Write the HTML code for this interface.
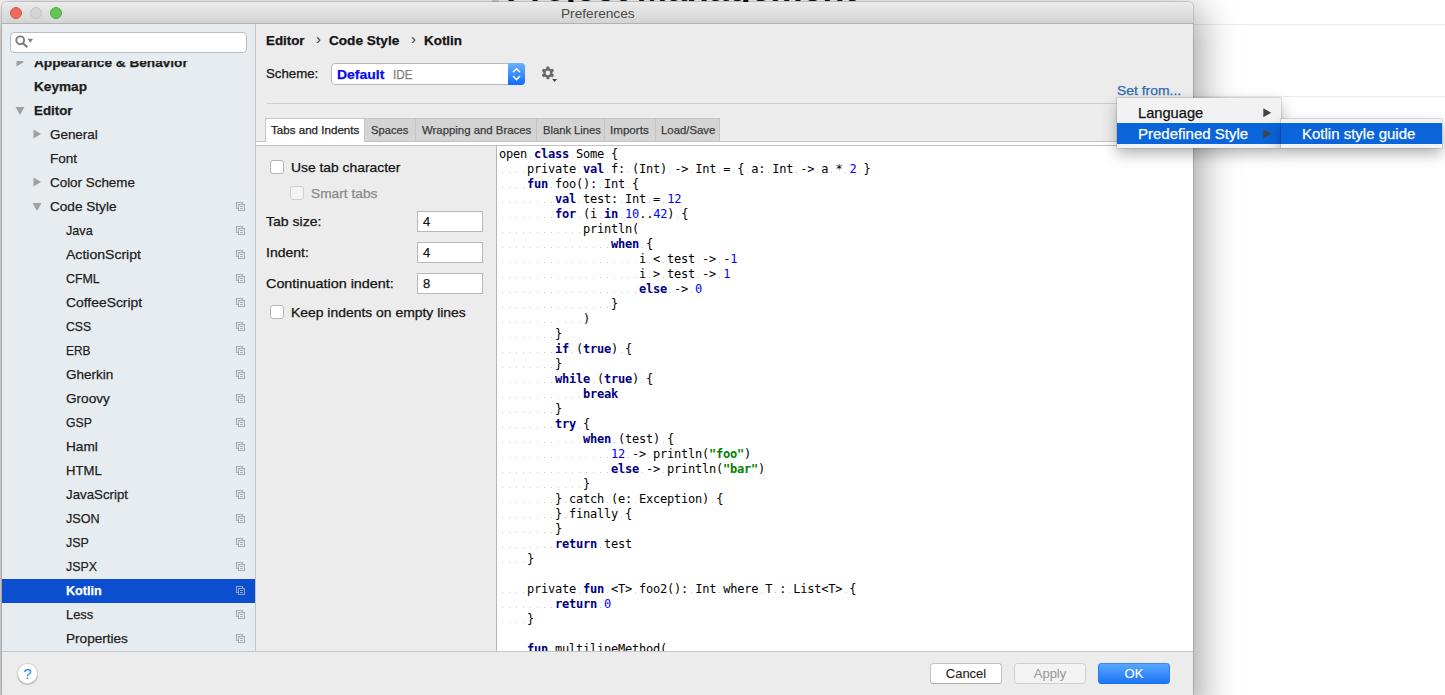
<!DOCTYPE html>
<html><head><meta charset="utf-8"><title>Preferences</title>
<style>
*{box-sizing:border-box;margin:0;padding:0}
html,body{width:1445px;height:695px;overflow:hidden;background:#fff}
body{font-family:"Liberation Sans",Arial,sans-serif;font-size:13px;color:#141414;position:relative;-webkit-text-stroke:0.25px}
.abs{position:absolute}
#bgtitle{-webkit-text-stroke:0;position:absolute;left:506px;top:-28.8px;font-size:36.5px;font-weight:bold;color:#111;white-space:nowrap;line-height:36.5px;letter-spacing:-0.4px}
.hl{position:absolute;height:1px;background:#ebebeb}
#win{position:absolute;left:2px;top:2px;width:1191px;height:700px;background:#ececec;border-radius:5px 5px 0 0;box-shadow:0 0 0 1px rgba(0,0,0,.13),0 12px 38px 7px rgba(0,0,0,.38);overflow:hidden}
#tb{position:absolute;left:0;top:0;width:100%;height:22px;background:linear-gradient(#ebebeb,#d4d4d4);border-bottom:1px solid #b1b1b1;color:#4a4a4a;font-size:13px}
.tl{position:absolute;top:5px;width:12px;height:12px;border-radius:50%}
#side{position:absolute;left:0;top:22px;width:253px;height:627px;background:#e7ecf1;overflow:hidden}
#sideb{position:absolute;left:253px;top:22px;width:1px;height:627px;background:#c3c3c3}
#search{position:absolute;left:8px;top:8px;width:237px;height:21px;background:#fff;border:1px solid #b9bcc0;border-radius:4px}
#tree{position:absolute;left:0;top:37px;width:253px;height:590px;overflow:hidden}
#treein{position:absolute;left:-2px;top:-61px;width:260px;height:700px}
.tr{position:absolute;height:24px;line-height:24px;white-space:nowrap;font-size:13px;color:#1e1e1e}
.tr.b{font-weight:bold}
.tr.w{color:#fff}
.sel{position:absolute;left:2px;width:253px;height:24px;background:#0b4fd0}
.cp{position:absolute;left:236px}
.ar{position:absolute}
#main{position:absolute;left:254px;top:22px;width:937px;height:627px}
.t{position:absolute;white-space:nowrap;line-height:16px;height:16px}
#bar{position:absolute;left:0;top:649px;width:1191px;height:60px;background:#ececec;border-top:1px solid #c5c5c5}
.btn{-webkit-text-stroke:0.1px;position:absolute;top:11px;width:72px;height:21px;border-radius:3.5px;background:#fff;border:1px solid #c2c2c2;border-bottom-color:#acacac;text-align:center;line-height:19px;font-size:13px;color:#1d1d1d}
#editor{position:absolute;left:240px;top:121px;width:700px;height:506px;background:#fff;border-left:1px solid #b5b5b5;border-top:1px solid #c0c0c0;overflow:hidden}
#code{-webkit-text-stroke:0;position:absolute;left:2px;top:1px;font-family:"DejaVu Sans Mono","Liberation Mono",monospace;font-size:12px;line-height:15px;color:#000;white-space:pre;letter-spacing:-0.224px}
.ln{height:15px}
.ln b{color:#000080}
.ln b.s{color:#008000}
.ln u{color:#0000ff;text-decoration:none}
.ln i{font-style:normal;background-image:linear-gradient(90deg,rgba(0,0,0,0) 3px,#c4c4c4 3px,#c4c4c4 4px,rgba(0,0,0,0) 4px);background-size:7px 1px;background-position:0 10px;background-repeat:repeat-x}
.tab{position:absolute;top:0;height:23px;line-height:23px;font-size:11.5px;color:#3c3c3c;border-right:1px solid #c4c4c4;background:#d4d4d4;white-space:nowrap}
.tab span{position:absolute;top:0}
.cb{position:absolute;width:14px;height:14px;border-radius:3px;background:#fff;border:1px solid #b4b4b4}
.inp{position:absolute;left:161px;width:66px;height:21px;background:#fff;border:1px solid #b8b8b8;line-height:19px;padding-left:5px;font-size:13px}
.menu{position:absolute;background:#f2f2f2;box-shadow:0 0 0 0.5px rgba(0,0,0,.22),0 6px 14px rgba(0,0,0,.3);}
.mi span{display:inline-block}
.mi{position:absolute;left:0;height:21px;line-height:21px;font-size:15px;color:#111;white-space:nowrap}
.mi.h{background:#0a64da;color:#fff}
</style></head><body>
<div id="bgtitle">Project Management</div>
<div class="abs" style="left:492px;top:0;width:7px;height:2px;background:#dcdcdc"></div>
<div class="hl" style="left:1193px;top:24px;width:252px"></div>
<div class="hl" style="left:1193px;top:96px;width:252px"></div>

<div id="win">
 <div id="tb"><div class="t" id="title" style="left:559px;top:4px;-webkit-text-stroke:0;transform:scaleX(1.05);transform-origin:0 50%">Preferences</div>
  <div class="tl" style="left:8px;background:#ee6a5e;border:1px solid #d9534a"></div>
  <div class="tl" style="left:28px;background:#d5d5d5;border:1px solid #c2c2c2"></div>
  <div class="tl" style="left:48px;background:#62c655;border:1px solid #52a842"></div>
 </div>
 <div id="side">
  <div id="search">
   <svg class="abs" style="left:4px;top:2px" width="22" height="16" viewBox="0 0 22 16"><circle cx="5.2" cy="5.3" r="3.9" fill="none" stroke="#7c7c7c" stroke-width="1.9"/><path d="M8 8.2L12.3 12.3" stroke="#7c7c7c" stroke-width="2.2"/><path d="M12.7 3.8h5.3l-2.65 3.9z" fill="#7c7c7c"/></svg>
  </div>
  <div id="tree"><div id="treein">
<div class="tr b" id="t_AppearanceBehavior" style="top:51px;left:34.0px;transform:scaleX(1.0483);transform-origin:0 50%">Appearance &amp; Behavior</div>
<div class="tr b" id="t_Keymap" style="top:75px;left:34.0px;transform:scaleX(1.0471);transform-origin:0 50%">Keymap</div>
<div class="tr b" id="t_Editor" style="top:99px;left:34.0px;transform:scaleX(1.0237);transform-origin:0 50%">Editor</div>
<div class="tr " id="t_General" style="top:123px;left:50.0px;transform:scaleX(1.0326);transform-origin:0 50%">General</div>
<div class="tr " id="t_Font" style="top:147px;left:50.0px;transform:scaleX(1.0407);transform-origin:0 50%">Font</div>
<div class="tr " id="t_ColorScheme" style="top:171px;left:50.0px;transform:scaleX(1.0313);transform-origin:0 50%">Color Scheme</div>
<div class="tr " id="t_CodeStyle" style="top:195px;left:50.0px;transform:scaleX(1.0453);transform-origin:0 50%">Code Style</div><svg class="cp" style="top:202px" width="9" height="9" viewBox="0 0 9 9"><rect x="0.5" y="0.5" width="6" height="6" fill="none" stroke="#a2abb3" stroke-width="1"/><rect x="2.5" y="2.5" width="6" height="6" fill="#e7ecf1" stroke="#a2abb3" stroke-width="1"/><path d="M4 4.5h3M4 6.5h3" stroke="#a2abb3" stroke-width="1"/></svg>
<div class="tr " id="t_Java" style="top:219px;left:66.0px;transform:scaleX(0.9724);transform-origin:0 50%">Java</div><svg class="cp" style="top:226px" width="9" height="9" viewBox="0 0 9 9"><rect x="0.5" y="0.5" width="6" height="6" fill="none" stroke="#a2abb3" stroke-width="1"/><rect x="2.5" y="2.5" width="6" height="6" fill="#e7ecf1" stroke="#a2abb3" stroke-width="1"/><path d="M4 4.5h3M4 6.5h3" stroke="#a2abb3" stroke-width="1"/></svg>
<div class="tr " id="t_ActionScript" style="top:243px;left:66.0px;transform:scaleX(1.0803);transform-origin:0 50%">ActionScript</div><svg class="cp" style="top:250px" width="9" height="9" viewBox="0 0 9 9"><rect x="0.5" y="0.5" width="6" height="6" fill="none" stroke="#a2abb3" stroke-width="1"/><rect x="2.5" y="2.5" width="6" height="6" fill="#e7ecf1" stroke="#a2abb3" stroke-width="1"/><path d="M4 4.5h3M4 6.5h3" stroke="#a2abb3" stroke-width="1"/></svg>
<div class="tr " id="t_CFML" style="top:267px;left:66.0px;transform:scaleX(0.9528);transform-origin:0 50%">CFML</div><svg class="cp" style="top:274px" width="9" height="9" viewBox="0 0 9 9"><rect x="0.5" y="0.5" width="6" height="6" fill="none" stroke="#a2abb3" stroke-width="1"/><rect x="2.5" y="2.5" width="6" height="6" fill="#e7ecf1" stroke="#a2abb3" stroke-width="1"/><path d="M4 4.5h3M4 6.5h3" stroke="#a2abb3" stroke-width="1"/></svg>
<div class="tr " id="t_CoffeeScript" style="top:291px;left:66.0px;transform:scaleX(1.0681);transform-origin:0 50%">CoffeeScript</div><svg class="cp" style="top:298px" width="9" height="9" viewBox="0 0 9 9"><rect x="0.5" y="0.5" width="6" height="6" fill="none" stroke="#a2abb3" stroke-width="1"/><rect x="2.5" y="2.5" width="6" height="6" fill="#e7ecf1" stroke="#a2abb3" stroke-width="1"/><path d="M4 4.5h3M4 6.5h3" stroke="#a2abb3" stroke-width="1"/></svg>
<div class="tr " id="t_CSS" style="top:315px;left:66.0px;transform:scaleX(0.937);transform-origin:0 50%">CSS</div><svg class="cp" style="top:322px" width="9" height="9" viewBox="0 0 9 9"><rect x="0.5" y="0.5" width="6" height="6" fill="none" stroke="#a2abb3" stroke-width="1"/><rect x="2.5" y="2.5" width="6" height="6" fill="#e7ecf1" stroke="#a2abb3" stroke-width="1"/><path d="M4 4.5h3M4 6.5h3" stroke="#a2abb3" stroke-width="1"/></svg>
<div class="tr " id="t_ERB" style="top:339px;left:66.0px;transform:scaleX(0.9111);transform-origin:0 50%">ERB</div><svg class="cp" style="top:346px" width="9" height="9" viewBox="0 0 9 9"><rect x="0.5" y="0.5" width="6" height="6" fill="none" stroke="#a2abb3" stroke-width="1"/><rect x="2.5" y="2.5" width="6" height="6" fill="#e7ecf1" stroke="#a2abb3" stroke-width="1"/><path d="M4 4.5h3M4 6.5h3" stroke="#a2abb3" stroke-width="1"/></svg>
<div class="tr " id="t_Gherkin" style="top:363px;left:66.0px;transform:scaleX(1.0391);transform-origin:0 50%">Gherkin</div><svg class="cp" style="top:370px" width="9" height="9" viewBox="0 0 9 9"><rect x="0.5" y="0.5" width="6" height="6" fill="none" stroke="#a2abb3" stroke-width="1"/><rect x="2.5" y="2.5" width="6" height="6" fill="#e7ecf1" stroke="#a2abb3" stroke-width="1"/><path d="M4 4.5h3M4 6.5h3" stroke="#a2abb3" stroke-width="1"/></svg>
<div class="tr " id="t_Groovy" style="top:387px;left:66.0px;transform:scaleX(1.0465);transform-origin:0 50%">Groovy</div><svg class="cp" style="top:394px" width="9" height="9" viewBox="0 0 9 9"><rect x="0.5" y="0.5" width="6" height="6" fill="none" stroke="#a2abb3" stroke-width="1"/><rect x="2.5" y="2.5" width="6" height="6" fill="#e7ecf1" stroke="#a2abb3" stroke-width="1"/><path d="M4 4.5h3M4 6.5h3" stroke="#a2abb3" stroke-width="1"/></svg>
<div class="tr " id="t_GSP" style="top:411px;left:66.0px;transform:scaleX(0.9393);transform-origin:0 50%">GSP</div><svg class="cp" style="top:418px" width="9" height="9" viewBox="0 0 9 9"><rect x="0.5" y="0.5" width="6" height="6" fill="none" stroke="#a2abb3" stroke-width="1"/><rect x="2.5" y="2.5" width="6" height="6" fill="#e7ecf1" stroke="#a2abb3" stroke-width="1"/><path d="M4 4.5h3M4 6.5h3" stroke="#a2abb3" stroke-width="1"/></svg>
<div class="tr " id="t_Haml" style="top:435px;left:66.0px;transform:scaleX(1.05);transform-origin:0 50%">Haml</div><svg class="cp" style="top:442px" width="9" height="9" viewBox="0 0 9 9"><rect x="0.5" y="0.5" width="6" height="6" fill="none" stroke="#a2abb3" stroke-width="1"/><rect x="2.5" y="2.5" width="6" height="6" fill="#e7ecf1" stroke="#a2abb3" stroke-width="1"/><path d="M4 4.5h3M4 6.5h3" stroke="#a2abb3" stroke-width="1"/></svg>
<div class="tr " id="t_HTML" style="top:459px;left:66.0px;transform:scaleX(1.0083);transform-origin:0 50%">HTML</div><svg class="cp" style="top:466px" width="9" height="9" viewBox="0 0 9 9"><rect x="0.5" y="0.5" width="6" height="6" fill="none" stroke="#a2abb3" stroke-width="1"/><rect x="2.5" y="2.5" width="6" height="6" fill="#e7ecf1" stroke="#a2abb3" stroke-width="1"/><path d="M4 4.5h3M4 6.5h3" stroke="#a2abb3" stroke-width="1"/></svg>
<div class="tr " id="t_JavaScript" style="top:483px;left:66.0px;transform:scaleX(1.0206);transform-origin:0 50%">JavaScript</div><svg class="cp" style="top:490px" width="9" height="9" viewBox="0 0 9 9"><rect x="0.5" y="0.5" width="6" height="6" fill="none" stroke="#a2abb3" stroke-width="1"/><rect x="2.5" y="2.5" width="6" height="6" fill="#e7ecf1" stroke="#a2abb3" stroke-width="1"/><path d="M4 4.5h3M4 6.5h3" stroke="#a2abb3" stroke-width="1"/></svg>
<div class="tr " id="t_JSON" style="top:507px;left:66.0px;transform:scaleX(0.9694);transform-origin:0 50%">JSON</div><svg class="cp" style="top:514px" width="9" height="9" viewBox="0 0 9 9"><rect x="0.5" y="0.5" width="6" height="6" fill="none" stroke="#a2abb3" stroke-width="1"/><rect x="2.5" y="2.5" width="6" height="6" fill="#e7ecf1" stroke="#a2abb3" stroke-width="1"/><path d="M4 4.5h3M4 6.5h3" stroke="#a2abb3" stroke-width="1"/></svg>
<div class="tr " id="t_JSP" style="top:531px;left:66.0px;transform:scaleX(0.956);transform-origin:0 50%">JSP</div><svg class="cp" style="top:538px" width="9" height="9" viewBox="0 0 9 9"><rect x="0.5" y="0.5" width="6" height="6" fill="none" stroke="#a2abb3" stroke-width="1"/><rect x="2.5" y="2.5" width="6" height="6" fill="#e7ecf1" stroke="#a2abb3" stroke-width="1"/><path d="M4 4.5h3M4 6.5h3" stroke="#a2abb3" stroke-width="1"/></svg>
<div class="tr " id="t_JSPX" style="top:555px;left:66.0px;transform:scaleX(0.9529);transform-origin:0 50%">JSPX</div><svg class="cp" style="top:562px" width="9" height="9" viewBox="0 0 9 9"><rect x="0.5" y="0.5" width="6" height="6" fill="none" stroke="#a2abb3" stroke-width="1"/><rect x="2.5" y="2.5" width="6" height="6" fill="#e7ecf1" stroke="#a2abb3" stroke-width="1"/><path d="M4 4.5h3M4 6.5h3" stroke="#a2abb3" stroke-width="1"/></svg>
<div class="sel" style="top:579px"></div><div class="tr b w" id="t_Kotlin" style="top:579px;left:66.0px;transform:scaleX(0.9703);transform-origin:0 50%">Kotlin</div><svg class="cp" style="top:586px" width="9" height="9" viewBox="0 0 9 9"><rect x="0.5" y="0.5" width="6" height="6" fill="none" stroke="#93a4c4" stroke-width="1"/><rect x="2.5" y="2.5" width="6" height="6" fill="#0b4fd0" stroke="#93a4c4" stroke-width="1"/><path d="M4 4.5h3M4 6.5h3" stroke="#93a4c4" stroke-width="1"/></svg>
<div class="tr " id="t_Less" style="top:603px;left:66.0px;transform:scaleX(0.9929);transform-origin:0 50%">Less</div><svg class="cp" style="top:610px" width="9" height="9" viewBox="0 0 9 9"><rect x="0.5" y="0.5" width="6" height="6" fill="none" stroke="#a2abb3" stroke-width="1"/><rect x="2.5" y="2.5" width="6" height="6" fill="#e7ecf1" stroke="#a2abb3" stroke-width="1"/><path d="M4 4.5h3M4 6.5h3" stroke="#a2abb3" stroke-width="1"/></svg>
<div class="tr " id="t_Properties" style="top:627px;left:66.0px;transform:scaleX(1.045);transform-origin:0 50%">Properties</div><svg class="cp" style="top:634px" width="9" height="9" viewBox="0 0 9 9"><rect x="0.5" y="0.5" width="6" height="6" fill="none" stroke="#a2abb3" stroke-width="1"/><rect x="2.5" y="2.5" width="6" height="6" fill="#e7ecf1" stroke="#a2abb3" stroke-width="1"/><path d="M4 4.5h3M4 6.5h3" stroke="#a2abb3" stroke-width="1"/></svg>
<svg class="ar" style="left:15px;top:57px" width="10" height="10" viewBox="0 0 10 10"><path d="M1.5 0.5L9 5L1.5 9.5Z" fill="#a0a0a0"/></svg>
<svg class="ar" style="left:15px;top:105px" width="10" height="10" viewBox="0 0 10 10"><path d="M0.5 2L9.5 2L5 10Z" fill="#a0a0a0"/></svg>
<svg class="ar" style="left:32px;top:129px" width="10" height="10" viewBox="0 0 10 10"><path d="M1.5 0.5L9 5L1.5 9.5Z" fill="#a0a0a0"/></svg>
<svg class="ar" style="left:32px;top:177px" width="10" height="10" viewBox="0 0 10 10"><path d="M1.5 0.5L9 5L1.5 9.5Z" fill="#a0a0a0"/></svg>
<svg class="ar" style="left:32px;top:201px" width="10" height="10" viewBox="0 0 10 10"><path d="M0.5 2L9.5 2L5 10Z" fill="#a0a0a0"/></svg>
  </div></div>
 </div>
 <div id="sideb"></div>
 <div id="main">
  <div class="t" style="left:10px;top:9px;font-weight:bold;transform:scaleX(1.0237);transform-origin:0 50%" id="c1">Editor</div>
  <div class="t" style="left:60px;top:7px;font-size:15px;-webkit-text-stroke:0;color:#333">&#8250;</div>
  <div class="t" style="left:73px;top:9px;font-weight:bold;transform:scaleX(1.0456);transform-origin:0 50%" id="c2">Code Style</div>
  <div class="t" style="left:155px;top:7px;font-size:15px;-webkit-text-stroke:0;color:#333">&#8250;</div>
  <div class="t" style="left:168px;top:9px;font-weight:bold;transform:scaleX(1.0324);transform-origin:0 50%" id="c3">Kotlin</div>
  <div class="t" style="left:10px;top:42px;transform:scaleX(1.0196);transform-origin:0 50%" id="schl">Scheme:</div>
  <div class="abs" id="combo" style="left:75px;top:39px;width:194px;height:22px;background:#fff;border:1px solid #b9b9b9;border-radius:4px">
    <div class="t" style="left:5px;top:3px;font-weight:bold;color:#0c0cf0;transform:scaleX(1.0756);transform-origin:0 50%" id="deflt">Default</div>
    <div class="t" style="left:61px;top:3px;color:#7f7f7f;transform:scaleX(0.9045);transform-origin:0 50%" id="ide">IDE</div>
    <div class="abs" style="right:-1px;top:-1px;width:17px;height:22px;border-radius:0 4px 4px 0;background:linear-gradient(#6bb2fd,#0f6cfb)">
      <svg width="17" height="22" viewBox="0 0 17 22"><path d="M5.4 8.8L8.5 5.7L11.6 8.8M5.4 13.5L8.5 16.6L11.6 13.5" fill="none" stroke="#fff" stroke-width="1.45" stroke-linecap="round" stroke-linejoin="miter"/></svg>
    </div>
  </div>
  <svg class="abs" id="gear" style="left:284px;top:41px" width="20" height="18" viewBox="0 0 20 18"><g transform="translate(7.9,7.9)" fill="#686868"><circle r="4.6"/><rect x="-1.55" y="-6.35" width="3.1" height="4" rx="0.9" transform="rotate(0)"/><rect x="-1.55" y="-6.35" width="3.1" height="4" rx="0.9" transform="rotate(60)"/><rect x="-1.55" y="-6.35" width="3.1" height="4" rx="0.9" transform="rotate(120)"/><rect x="-1.55" y="-6.35" width="3.1" height="4" rx="0.9" transform="rotate(180)"/><rect x="-1.55" y="-6.35" width="3.1" height="4" rx="0.9" transform="rotate(240)"/><rect x="-1.55" y="-6.35" width="3.1" height="4" rx="0.9" transform="rotate(300)"/><circle r="2.3" fill="#ececec"/></g><path d="M12.1 14.1h5l-2.5 3z" fill="#444"/></svg>
  <div class="t" style="left:861px;top:59px;color:#2e6db3;transform:scaleX(1.07);transform-origin:0 50%" id="setfrom">Set from...</div>
  <div class="abs" style="left:11px;top:79px;width:920px;height:1px;background:#cdcdcd"></div>
  <!-- tabs -->
  <div class="abs" id="tabs" style="left:9px;top:94px;width:455px;height:24px;background:#d4d4d4;border-top:1px solid #c6c6c6;border-left:1px solid #c6c6c6">
    <div class="tab" style="left:0;width:99px;background:#fff;color:#1d1d1d;height:24px"><span id="tb1" style="left:5px;transform:scaleX(1.0079);transform-origin:0 50%">Tabs and Indents</span></div>
    <div class="tab" style="left:99px;width:51px"><span id="tb2" style="left:6px;transform:scaleX(0.9744);transform-origin:0 50%">Spaces</span></div>
    <div class="tab" style="left:150px;width:121px"><span id="tb3" style="left:6px;transform:scaleX(0.9902);transform-origin:0 50%">Wrapping and Braces</span></div>
    <div class="tab" style="left:271px;width:68px"><span id="tb4" style="left:5.5px;transform:scaleX(0.9729);transform-origin:0 50%">Blank Lines</span></div>
    <div class="tab" style="left:339px;width:51px"><span id="tb5" style="left:5px;transform:scaleX(1.0103);transform-origin:0 50%">Imports</span></div>
    <div class="tab" style="left:390px;width:64px"><span id="tb6" style="left:5px;transform:scaleX(0.9873);transform-origin:0 50%">Load/Save</span></div>
  </div>
  <div class="abs" style="left:0;top:117px;width:10px;height:1px;background:#c4c4c4"></div>
  <div class="abs" style="left:109px;top:117px;width:828px;height:1px;background:#c4c4c4"></div>
  <div class="abs" style="left:0;top:118px;width:937px;height:3px;background:#fff"></div>
  <div class="abs" style="left:0;top:121px;width:937px;height:1px;background:#c0c0c0"></div>
  <!-- left options -->
  <div class="cb" style="left:14px;top:136px"></div>
  <div class="t" style="left:35px;top:136px;transform:scaleX(1.066);transform-origin:0 50%" id="o1">Use tab character</div>
  <div class="cb" style="left:34px;top:162px;border-color:#cfcfcf;background:#f4f4f4"></div>
  <div class="t" style="left:55px;top:162px;color:#8a8a8a;transform:scaleX(1.0571);transform-origin:0 50%" id="o2">Smart tabs</div>
  <div class="t" style="left:10px;top:190px;transform:scaleX(1.0808);transform-origin:0 50%" id="o3">Tab size:</div>
  <div class="inp" style="top:187px">4</div>
  <div class="t" style="left:10px;top:221px;transform:scaleX(1.0775);transform-origin:0 50%" id="o4">Indent:</div>
  <div class="inp" style="top:218px">4</div>
  <div class="t" style="left:10px;top:252px;transform:scaleX(1.1052);transform-origin:0 50%" id="o5">Continuation indent:</div>
  <div class="inp" style="top:249px">8</div>
  <div class="cb" style="left:14px;top:281px"></div>
  <div class="t" style="left:35px;top:281px;transform:scaleX(1.0701);transform-origin:0 50%" id="o6">Keep indents on empty lines</div>
  <div id="editor"><div id="code"><div class="ln">open<i> </i><b>class</b><i> </i>Some<i> </i>{</div><div class="ln"><i>    </i>private<i> </i><b>val</b><i> </i>f:<i> </i>(Int)<i> </i>-&gt;<i> </i>Int<i> </i>=<i> </i>{<i> </i>a:<i> </i>Int<i> </i>-&gt;<i> </i>a<i> </i>*<i> </i><u>2</u><i> </i>}</div><div class="ln"><i>    </i><b>fun</b><i> </i>foo():<i> </i>Int<i> </i>{</div><div class="ln"><i>        </i><b>val</b><i> </i>test:<i> </i>Int<i> </i>=<i> </i><u>12</u></div><div class="ln"><i>        </i><b>for</b><i> </i>(i<i> </i><b>in</b><i> </i><u>10</u>..<u>42</u>)<i> </i>{</div><div class="ln"><i>            </i>println(</div><div class="ln"><i>                </i><b>when</b><i> </i>{</div><div class="ln"><i>                    </i>i<i> </i>&lt;<i> </i>test<i> </i>-&gt;<i> </i>-<u>1</u></div><div class="ln"><i>                    </i>i<i> </i>&gt;<i> </i>test<i> </i>-&gt;<i> </i><u>1</u></div><div class="ln"><i>                    </i><b>else</b><i> </i>-&gt;<i> </i><u>0</u></div><div class="ln"><i>                </i>}</div><div class="ln"><i>            </i>)</div><div class="ln"><i>        </i>}</div><div class="ln"><i>        </i><b>if</b><i> </i>(<b>true</b>)<i> </i>{</div><div class="ln"><i>        </i>}</div><div class="ln"><i>        </i><b>while</b><i> </i>(<b>true</b>)<i> </i>{</div><div class="ln"><i>            </i><b>break</b></div><div class="ln"><i>        </i>}</div><div class="ln"><i>        </i><b>try</b><i> </i>{</div><div class="ln"><i>            </i><b>when</b><i> </i>(test)<i> </i>{</div><div class="ln"><i>                </i><u>12</u><i> </i>-&gt;<i> </i>println(<b class="s">&quot;foo&quot;</b>)</div><div class="ln"><i>                </i><b>else</b><i> </i>-&gt;<i> </i>println(<b class="s">&quot;bar&quot;</b>)</div><div class="ln"><i>            </i>}</div><div class="ln"><i>        </i>}<i> </i>catch<i> </i>(e:<i> </i>Exception)<i> </i>{</div><div class="ln"><i>        </i>}<i> </i>finally<i> </i>{</div><div class="ln"><i>        </i>}</div><div class="ln"><i>        </i><b>return</b><i> </i>test</div><div class="ln"><i>    </i>}</div><div class="ln"></div><div class="ln"><i>    </i>private<i> </i><b>fun</b><i> </i>&lt;T&gt;<i> </i>foo2():<i> </i>Int<i> </i>where<i> </i>T<i> </i>:<i> </i>List&lt;T&gt;<i> </i>{</div><div class="ln"><i>        </i><b>return</b><i> </i><u>0</u></div><div class="ln"><i>    </i>}</div><div class="ln"></div><div class="ln"><i>    </i><b>fun</b><i> </i>multilineMethod(</div></div></div>
 </div>
 <div id="bar">
  <div class="abs" style="left:15px;top:11px;width:21px;height:21px;border-radius:50%;background:#fff;border:1px solid #d2d2d2;box-shadow:0 1px 1px rgba(0,0,0,.22);text-align:center;line-height:19px;color:#2a7df3;font-size:15px;-webkit-text-stroke:0">?</div>
  <div class="btn" style="left:928px">Cancel</div>
  <div class="btn" style="left:1012px;background:#f3f3f3;color:#9b9b9b;border-color:#cfcfcf">Apply</div>
  <div class="btn" style="left:1096px;background:linear-gradient(#58a7fc,#1c75f6);border-color:#3a86f3 #2d7cf0 #1f6fe8;color:#fff">OK</div>
 </div>
</div>

<!-- popup menus -->
<div class="menu" id="m1" style="left:1117px;top:98px;width:164px;height:50px">
  <div class="mi" style="top:4px;width:164px;padding-left:21px"><span id="mi1" style="transform:scaleX(0.9776);transform-origin:0 50%">Language</span><svg class="abs" style="left:146px;top:6px" width="9" height="10" viewBox="0 0 9 10"><path d="M0.3 0.3L8.2 4.8L0.3 9.3Z" fill="#444"/></svg></div>
  <div class="mi h" style="top:25px;width:164px;padding-left:21px"><span id="mi2" style="transform:scaleX(1.0009);transform-origin:0 50%">Predefined Style</span><svg class="abs" style="left:146px;top:6px" width="9" height="10" viewBox="0 0 9 10"><path d="M0.3 0.3L8.2 4.8L0.3 9.3Z" fill="#444"/></svg></div>
</div>
<div class="menu" id="m2" style="left:1281px;top:119px;width:161px;height:29px">
  <div class="mi h" style="top:4px;width:161px;padding-left:21px"><span id="mi3" style="transform:scaleX(0.9991);transform-origin:0 50%">Kotlin style guide</span></div>
</div>
</body></html>
